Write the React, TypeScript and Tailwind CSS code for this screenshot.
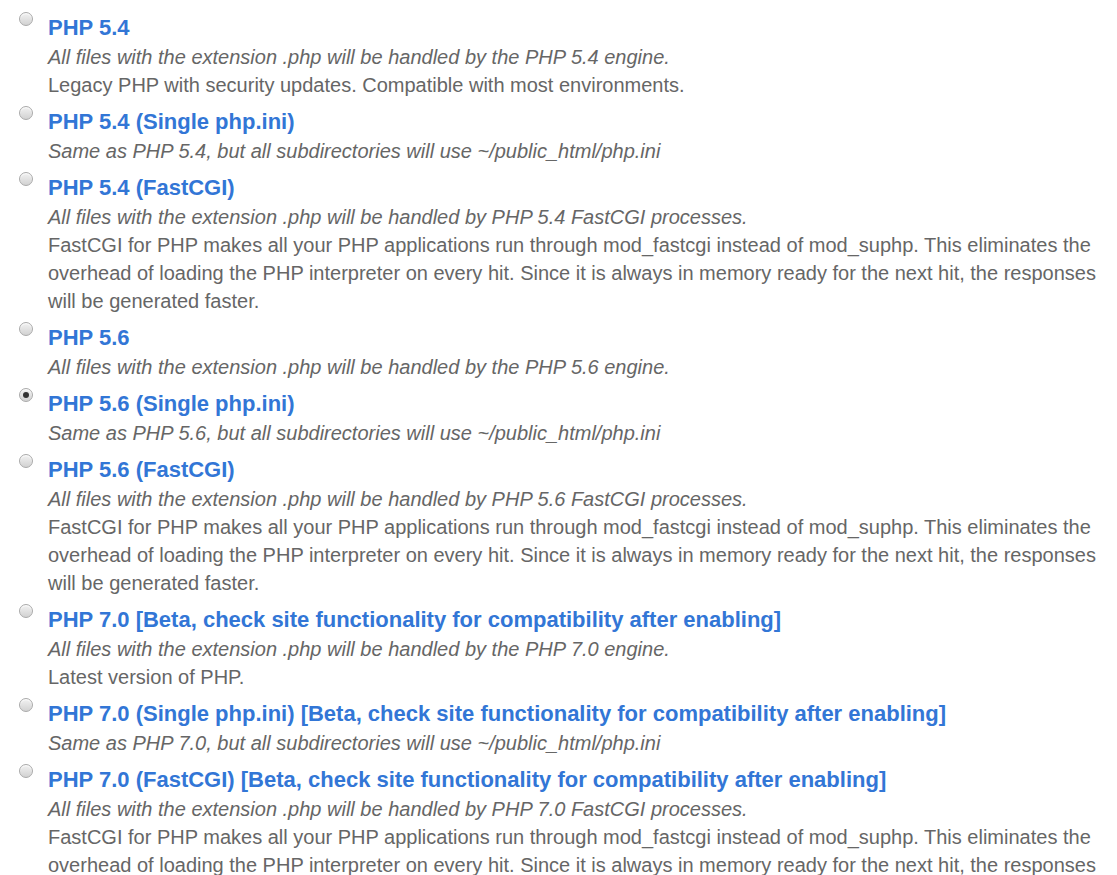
import React from 'react';

interface PhpOption {
  id: string;
  title: string;
  beta?: boolean;
  summary: string;
  detail?: string;
}

const FASTCGI_NOTE =
  'FastCGI for PHP makes all your PHP applications run through mod_fastcgi instead of mod_suphp. This eliminates the overhead of loading the PHP interpreter on every hit. Since it is always in memory ready for the next hit, the responses will be generated faster.';

const options: PhpOption[] = [
  {
    id: 'php54',
    title: 'PHP 5.4',
    summary: 'All files with the extension .php will be handled by the PHP 5.4 engine.',
    detail: 'Legacy PHP with security updates. Compatible with most environments.',
  },
  {
    id: 'php54-single',
    title: 'PHP 5.4 (Single php.ini)',
    summary: 'Same as PHP 5.4, but all subdirectories will use ~/public_html/php.ini',
  },
  {
    id: 'php54-fcgi',
    title: 'PHP 5.4 (FastCGI)',
    summary: 'All files with the extension .php will be handled by PHP 5.4 FastCGI processes.',
    detail: FASTCGI_NOTE,
  },
  {
    id: 'php56',
    title: 'PHP 5.6',
    summary: 'All files with the extension .php will be handled by the PHP 5.6 engine.',
  },
  {
    id: 'php56-single',
    title: 'PHP 5.6 (Single php.ini)',
    summary: 'Same as PHP 5.6, but all subdirectories will use ~/public_html/php.ini',
  },
  {
    id: 'php56-fcgi',
    title: 'PHP 5.6 (FastCGI)',
    summary: 'All files with the extension .php will be handled by PHP 5.6 FastCGI processes.',
    detail: FASTCGI_NOTE,
  },
  {
    id: 'php70',
    title: 'PHP 7.0',
    beta: true,
    summary: 'All files with the extension .php will be handled by the PHP 7.0 engine.',
    detail: 'Latest version of PHP.',
  },
  {
    id: 'php70-single',
    title: 'PHP 7.0 (Single php.ini)',
    beta: true,
    summary: 'Same as PHP 7.0, but all subdirectories will use ~/public_html/php.ini',
  },
  {
    id: 'php70-fcgi',
    title: 'PHP 7.0 (FastCGI)',
    beta: true,
    summary: 'All files with the extension .php will be handled by PHP 7.0 FastCGI processes.',
    detail: FASTCGI_NOTE,
  },
];

const Radio: React.FC<{ checked: boolean }> = ({ checked }) => (
  <span className="mt-[1px] flex h-[14px] w-[14px] shrink-0 items-center justify-center rounded-full border border-[#aaa] bg-gradient-to-b from-[#f2f2f2] to-[#d2d2d2] shadow-[inset_0_1px_1px_rgba(255,255,255,0.9)]">
    {checked && <span className="h-[6px] w-[6px] rounded-full bg-[#333]"></span>}
  </span>
);

export default function App() {
  const selected = 'php56-single';

  return (
    <div className="min-h-screen overflow-hidden bg-white pt-[11px] pl-[19px] pr-[12px] font-['Liberation_Sans',Arial,sans-serif]">
      {options.map((opt) => (
        <label key={opt.id} className="mb-[6px] flex cursor-pointer gap-[15px]">
          <Radio checked={selected === opt.id} />
          <div className="min-w-0">
            <div className="pt-[1px] text-[22px] font-bold leading-[31px] text-[#3276d6]">
              {opt.title}
              {opt.beta && ' [Beta, check site functionality for compatibility after enabling]'}
            </div>
            <div className="text-[20px] italic leading-[28px] text-[#666]">{opt.summary}</div>
            {opt.detail && (
              <div className="text-[20px] leading-[28px] text-[#666]">{opt.detail}</div>
            )}
          </div>
        </label>
      ))}
    </div>
  );
}
